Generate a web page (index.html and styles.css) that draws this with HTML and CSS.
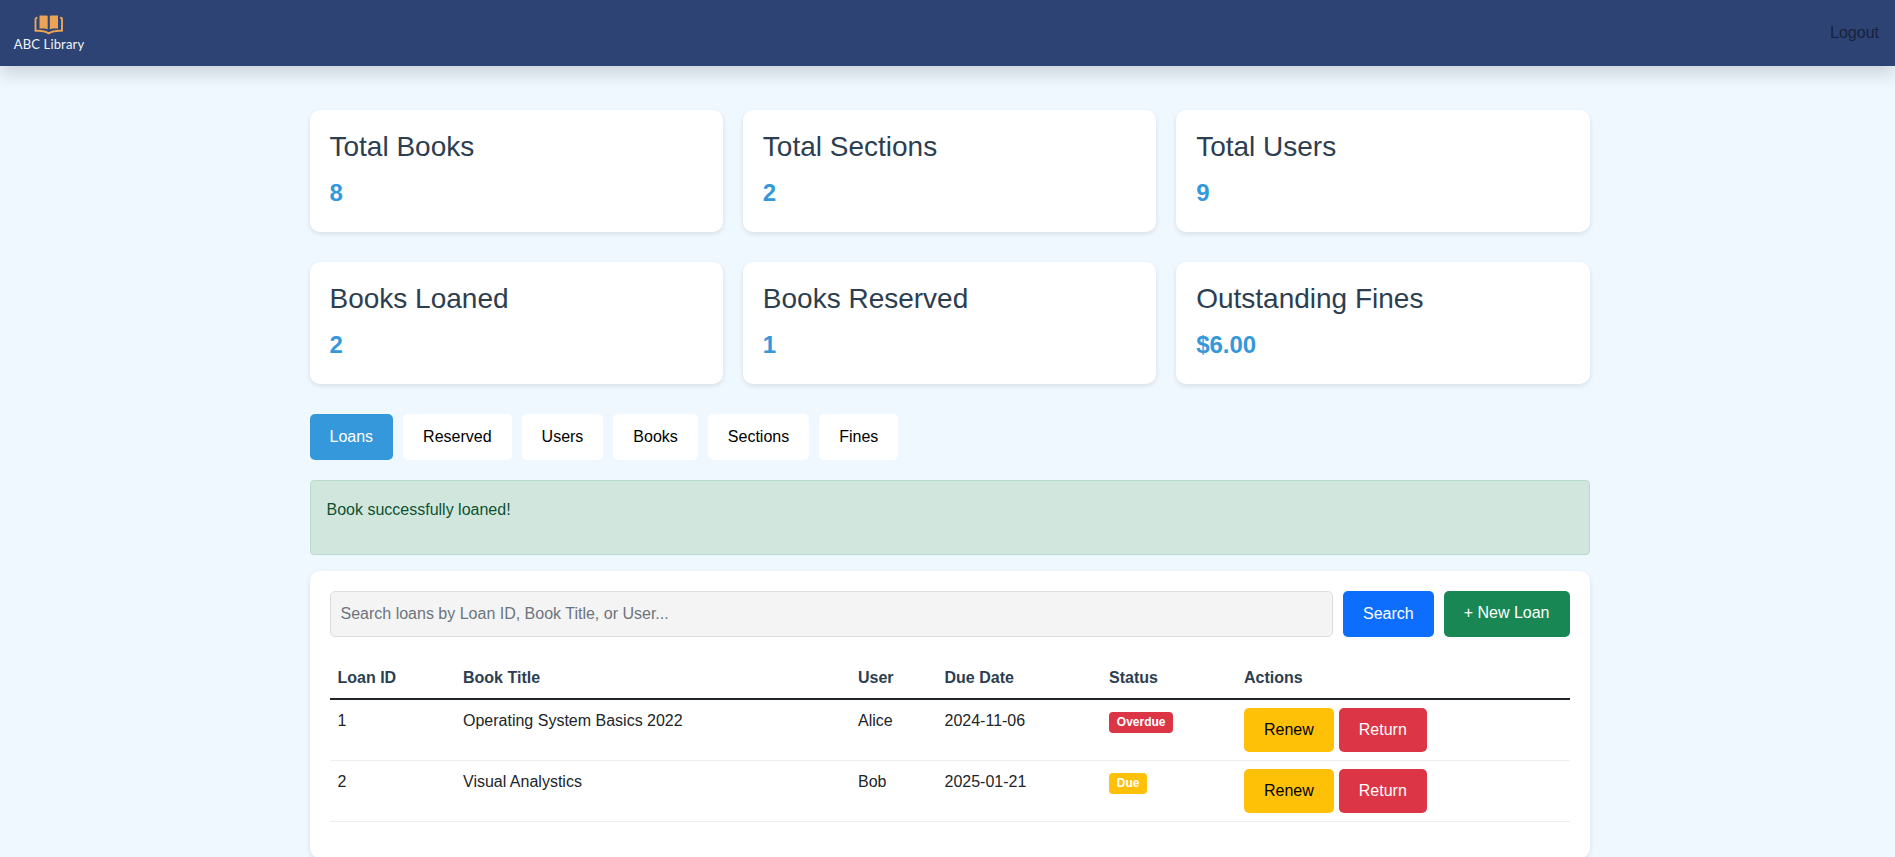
FILE: index.html
```html
<!DOCTYPE html>
<html lang="en">
<head>
<meta charset="utf-8">
<title>ABC Library</title>
<link rel="stylesheet" href="styles.css">
</head>
<body>
<header class="navbar">
  <a class="brand">
    <svg class="brand-icon" width="30" height="20" viewBox="0 0 30 20">
      <path fill="#eda356" d="M5.500.5H12.500q1.200 0 1.200 1.200V14.600Q12.300 13.500 10 13.500H5.500ZM15.800 1.700Q15.800.5 17 .5H24V13.500H19.500Q17.200 13.500 15.800 14.600Z"/>
      <path fill="none" stroke="#eda356" stroke-width="1.900" stroke-linejoin="round" d="M3.400 2.800Q1.500 2.800 1.500 4.200V15.900Q6 15.400 9.500 16.300Q12.500 17 14.750 18.400Q17 17 20 16.300Q23.500 15.400 28 15.900V4.200Q28 2.800 26.100 2.800"/>
    </svg>
    <span class="brand-name">ABC Library</span>
  </a>
  <a class="logout">Logout</a>
</header>
<main class="dashboard">
  <section class="stats">
    <div class="stat"><h3>Total Books</h3><p>8</p></div>
    <div class="stat"><h3>Total Sections</h3><p>2</p></div>
    <div class="stat"><h3>Total Users</h3><p>9</p></div>
    <div class="stat"><h3>Books Loaned</h3><p>2</p></div>
    <div class="stat"><h3>Books Reserved</h3><p>1</p></div>
    <div class="stat"><h3>Outstanding Fines</h3><p>$6.00</p></div>
  </section>
  <nav class="tabs">
    <a class="tab active">Loans</a>
    <a class="tab">Reserved</a>
    <a class="tab">Users</a>
    <a class="tab">Books</a>
    <a class="tab">Sections</a>
    <a class="tab">Fines</a>
  </nav>
  <div class="alert"><p>Book successfully loaned!</p></div>
  <section class="panel">
    <form class="search">
      <input class="search-input" type="text" placeholder="Search loans by Loan ID, Book Title, or User...">
      <button class="btn primary" type="button">Search</button>
      <a class="btn success">+ New Loan</a>
    </form>
    <table class="loans">
      <colgroup><col class="c-id"><col class="c-title"><col class="c-user"><col class="c-due"><col class="c-status"><col></colgroup>
      <thead>
        <tr><th>Loan ID</th><th>Book Title</th><th>User</th><th>Due Date</th><th>Status</th><th>Actions</th></tr>
      </thead>
      <tbody>
        <tr>
          <td>1</td><td>Operating System Basics 2022</td><td>Alice</td><td>2024-11-06</td>
          <td><span class="badge danger">Overdue</span></td>
          <td class="actions"><a class="btn warning">Renew</a> <a class="btn danger">Return</a></td>
        </tr>
        <tr>
          <td>2</td><td>Visual Analystics</td><td>Bob</td><td>2025-01-21</td>
          <td><span class="badge warning-badge">Due</span></td>
          <td class="actions"><a class="btn warning">Renew</a> <a class="btn danger">Return</a></td>
        </tr>
      </tbody>
    </table>
  </section>
</main>
</body>
</html>
```
FILE: styles.css
```css
* { box-sizing: border-box; }
html { height: 100%; overflow: hidden; }
body {
  margin: 0;
  height: 100%;
  overflow: hidden;
  background: #f0f8ff;
  color: #212529;
  font: 16px/1.6 "Liberation Sans", Arial, sans-serif;
}
h3, p { margin: 0; }
.navbar {
  display: flex;
  justify-content: space-between;
  align-items: center;
  height: 66px;
  padding: 0 16px 0 14px;
  background: #2d4373;
  box-shadow: 0 8px 16px rgba(0, 0, 0, .15);
}
.brand { display: flex; flex-direction: column; align-items: center; width: 70px; padding-top: 2px; }
.brand-icon { display: block; }
.brand-name { color: #f2f4f8; font: 13px/18px Lato, sans-serif; letter-spacing: .15px; white-space: nowrap; }
.logout { color: #17223d; }
.dashboard { width: 1280px; margin: 44px 0 0 309.5px; }
.stats { display: grid; grid-template-columns: repeat(3, 1fr); gap: 30px 20px; margin-bottom: 30px; }
.stat {
  height: 122px;
  padding: 20px;
  border-radius: 10px;
  background: #fff;
  box-shadow: 0 2px 5px rgba(0, 0, 0, .1);
}
.stat h3 { margin-bottom: 10px; color: #2c3e50; font-size: 28px; font-weight: 400; line-height: 1.2; }
.stat p { color: #3498db; font-size: 24px; font-weight: 700; }
.tabs { display: flex; gap: 10px; margin-bottom: 20px; }
.tab { padding: 10px 20px; border-radius: 5px; background: #fff; color: #000; }
.tab.active { background: #3498db; color: #fff; }
.alert {
  margin-bottom: 16px;
  padding: 16px 16px 32px;
  border: 1px solid #badbcc;
  border-radius: 4px;
  background: #d1e7dd;
  color: #0f5132;
}
.panel {
  padding: 20px 20px 36px;
  border-radius: 10px;
  background: #fff;
  box-shadow: 0 2px 5px rgba(0, 0, 0, .1);
}
.search { display: flex; gap: 10px; margin-bottom: 20px; }
.search-input {
  flex: 1;
  height: 45.6px;
  padding: 10px;
  border: 1px solid #ddd;
  border-radius: 5px;
  background: #f4f4f4;
  font: inherit;
}
.search-input::placeholder { color: #6c757d; opacity: 1; }
.btn {
  display: inline-block;
  padding: 10px 20px;
  border: 0;
  border-radius: 5px;
  color: #fff;
  font: 16px/24px "Liberation Sans", Arial, sans-serif;
}
.primary { background: #0d6efd; }
.success { background: #198754; }
.warning { background: #ffc107; color: #000; }
.danger { background: #dc3545; }
.loans { width: 100%; table-layout: fixed; border-collapse: collapse; }
.c-id { width: 125.5px; }
.c-title { width: 395px; }
.c-user { width: 86.5px; }
.c-due { width: 164.5px; }
.c-status { width: 135px; }
.loans th, .loans td { padding: 8px; text-align: left; vertical-align: top; }
.loans th { color: #2c3e50; border-bottom: 2px solid #212529; }
.loans td { border-bottom: 1px solid #eee; }
.actions { word-spacing: .5px; }
.actions .btn { vertical-align: top; }
.badge {
  display: inline-block;
  padding: 4.2px 7.8px;
  border-radius: 4px;
  color: #fff;
  font-size: 12px;
  font-weight: 700;
  line-height: 1;
  vertical-align: baseline;
}
.warning-badge { background: #ffc107; }
```
